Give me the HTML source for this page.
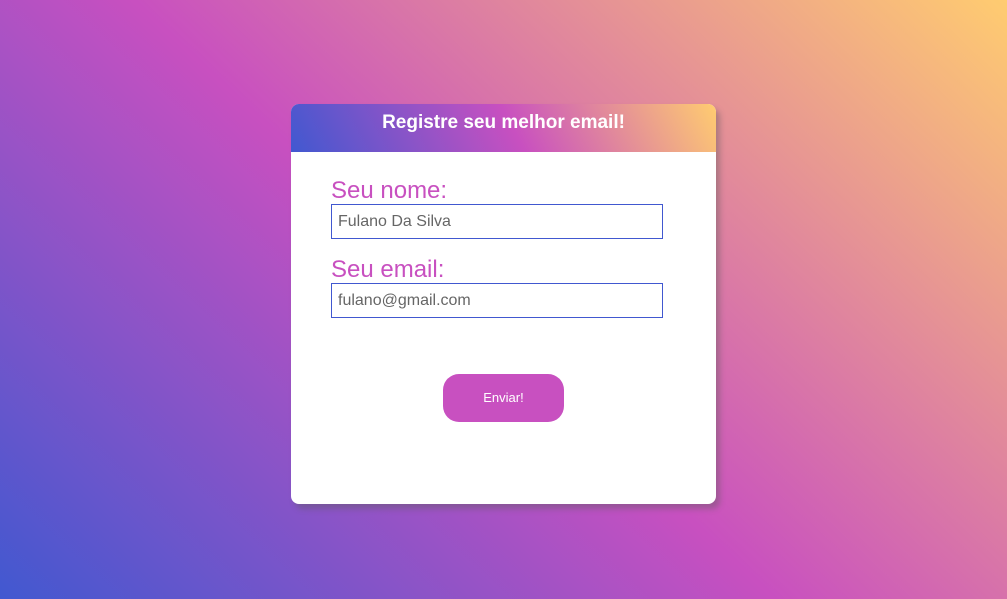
<!DOCTYPE html>
<html><head><style>
html,body{margin:0;width:1007px;height:599px;overflow:hidden;font-family:"Liberation Sans",sans-serif}
body{background:linear-gradient(43deg,#4158D0 0%,#C850C0 47%,#FFCC70 100%);position:relative}
.card{position:absolute;left:291px;top:104px;width:425px;height:400px;background:#fff;border-radius:8px;box-shadow:4px 5px 6px rgba(90,90,90,.4);overflow:hidden}
.hd{height:48px;background:linear-gradient(62deg,#4158D0 0%,#C850C0 52%,#FFCC70 100%);color:#fff;font-weight:bold;font-size:19px;text-align:center;line-height:20px;padding-top:9px;box-sizing:border-box}
.lab{position:absolute;left:40px;color:#c850c0;font-size:24px;line-height:24px}
.in{position:absolute;left:40px;width:332px;height:35px;box-sizing:border-box;border:1px solid #4158D0;color:#666;font-size:16px;line-height:34px;padding-left:6px}
.btn{position:absolute;left:152px;top:270px;width:121px;height:48px;border-radius:16px;background:#c850c0;color:#fff;font-size:13px;line-height:48px;text-align:center}
</style></head><body>
<div class="card">
<div class="hd">Registre seu melhor email!</div>
<div class="lab" style="top:75px">Seu nome:</div>
<div class="in" style="top:100px">Fulano Da Silva</div>
<div class="lab" style="top:154px">Seu email:</div>
<div class="in" style="top:179px">fulano@gmail.com</div>
<div class="btn">Enviar!</div>
</div>
</body></html>
